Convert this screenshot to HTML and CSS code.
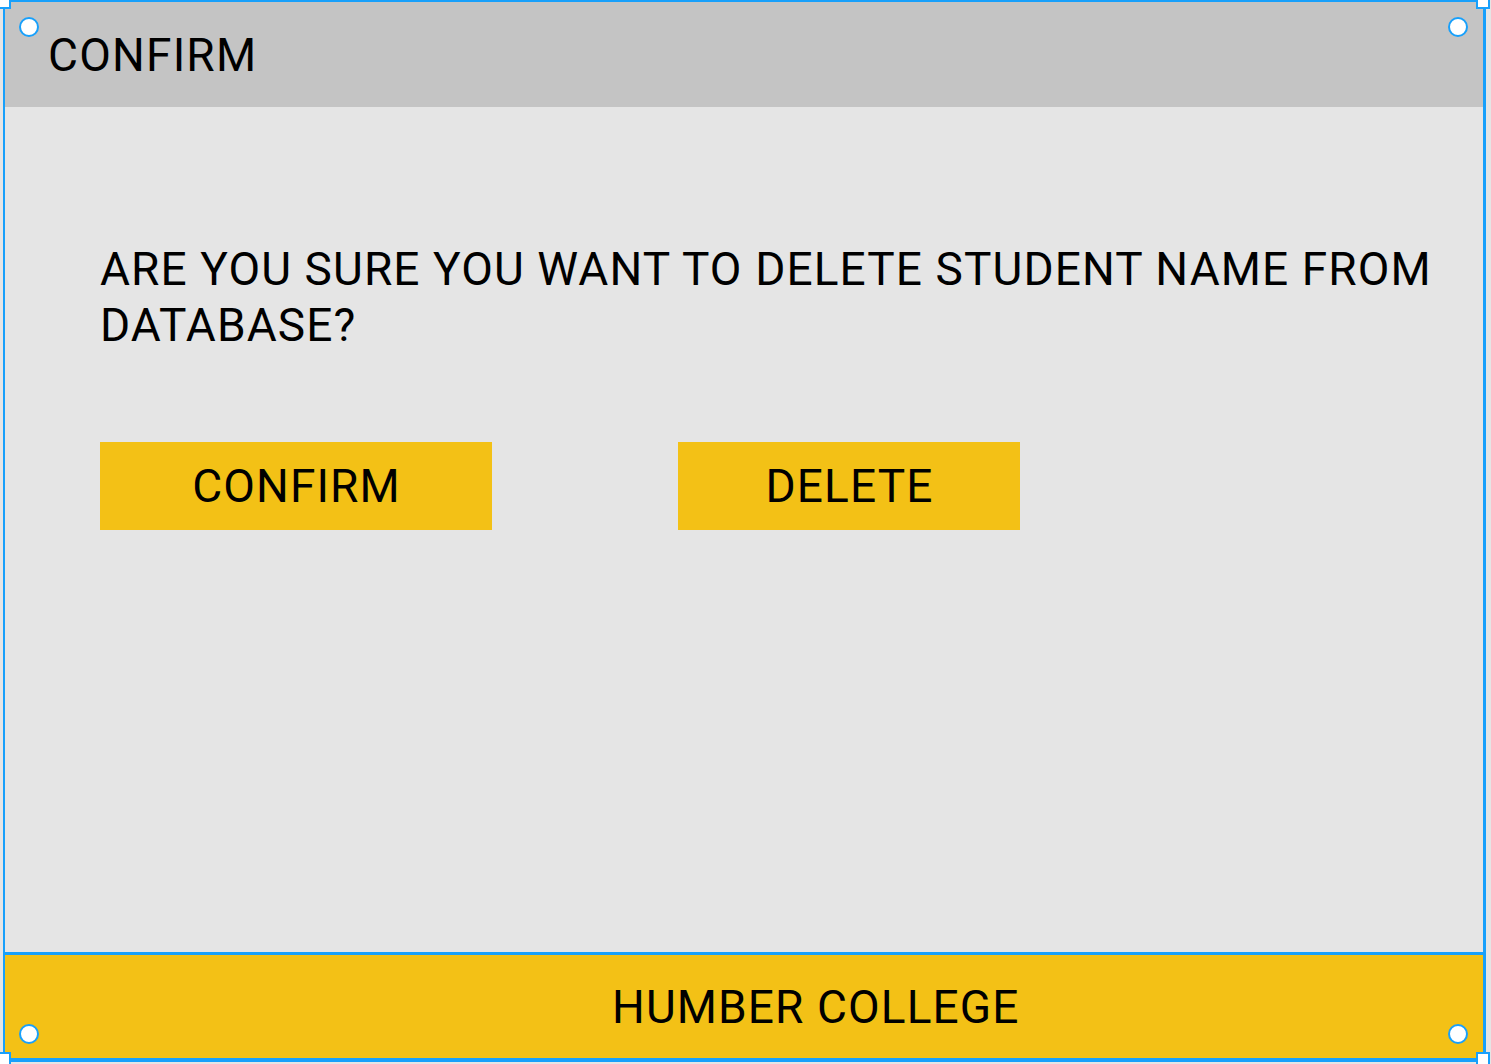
FILE: index.html
```html
<!DOCTYPE html>
<html>
<head>
<meta charset="utf-8">
<link rel="stylesheet" href="styles.css">
</head>
<body>
<div class="frame">
  <header class="topbar">
    <span class="title">CONFIRM</span>
  </header>
  <main class="content">
    <p class="question">ARE YOU SURE YOU WANT TO DELETE STUDENT NAME FROM DATABASE?</p>
    <div class="actions">
      <button class="btn btn-confirm">CONFIRM</button>
      <button class="btn btn-delete">DELETE</button>
    </div>
  </main>
  <footer class="footer">
    <span class="footer-text">HUMBER COLLEGE</span>
  </footer>
</div>
<span class="handle-sq sq-tl"></span>
<span class="handle-sq sq-tr"></span>
<span class="handle-sq sq-bl"></span>
<span class="handle-sq sq-br"></span>
<span class="handle-dot dot-tl"></span>
<span class="handle-dot dot-tr"></span>
<span class="handle-dot dot-bl"></span>
<span class="handle-dot dot-br"></span>
</body>
</html>
```
FILE: styles.css
```css
html, body {
  margin: 0;
  padding: 0;
}
body {
  width: 1491px;
  height: 1064px;
  overflow: hidden;
  background: #e5e5e5;
  font-family: Roboto, "Liberation Sans", sans-serif;
  color: #000;
  position: relative;
}
.frame {
  margin-left: 3px;
  width: 1483px;
  height: 1062px;
  box-sizing: border-box;
  border-left: 2px solid #18a0fb;
  border-top: 2px solid #18a0fb;
  border-right: 3px solid #18a0fb;
  display: flex;
  flex-direction: column;
  background: #e5e5e5;
}
.topbar {
  height: 105px;
  flex: none;
  background: #c4c4c4;
  display: flex;
  align-items: center;
  padding-left: 43px;
}
.title {
  font-size: 46px;
  line-height: 56px;
  letter-spacing: 1.2px;
}
.content {
  flex: 1;
  padding: 134px 0 0 95px;
}
.question {
  margin: 0;
  width: 1370px;
  font-size: 46px;
  line-height: 56px;
  letter-spacing: 1.1px;
}
.actions {
  display: flex;
  margin-top: 89px;
  gap: 186px;
}
.btn {
  height: 88px;
  border: 0;
  padding: 0 0 0 1px;
  background: #f3c116;
  font-family: inherit;
  font-size: 46px;
  letter-spacing: 1.1px;
  color: #000;
}
.btn-confirm { width: 392px; }
.btn-delete { width: 342px; }
.footer {
  height: 110px;
  flex: none;
  box-sizing: border-box;
  border-top: 3px solid #18a0fb;
  border-bottom: 4px solid #18a0fb;
  margin-left: -2px;
  margin-right: -3px;
  border-left: 2px solid #18a0fb;
  border-right: 3px solid #18a0fb;
  background: #f3c116;
  display: flex;
  align-items: center;
  padding-left: 607px;
}
.footer-text {
  font-size: 46px;
  line-height: 56px;
  letter-spacing: 1.1px;
}
.handle-sq {
  position: absolute;
  width: 14px;
  height: 14px;
  box-sizing: border-box;
  background: #fff;
  border: 2px solid #18a0fb;
}
.sq-tl { left: -3px; top: -5px; }
.sq-tr { left: 1476px; top: -5px; }
.sq-bl { left: -3px; top: 1052px; }
.sq-br { left: 1476px; top: 1052px; }
.handle-dot {
  position: absolute;
  width: 20px;
  height: 20px;
  box-sizing: border-box;
  border-radius: 50%;
  background: #fff;
  border: 2px solid #18a0fb;
}
.dot-tl { left: 19px; top: 17px; }
.dot-tr { left: 1448px; top: 17px; }
.dot-bl { left: 19px; top: 1024px; }
.dot-br { left: 1448px; top: 1024px; }
```
